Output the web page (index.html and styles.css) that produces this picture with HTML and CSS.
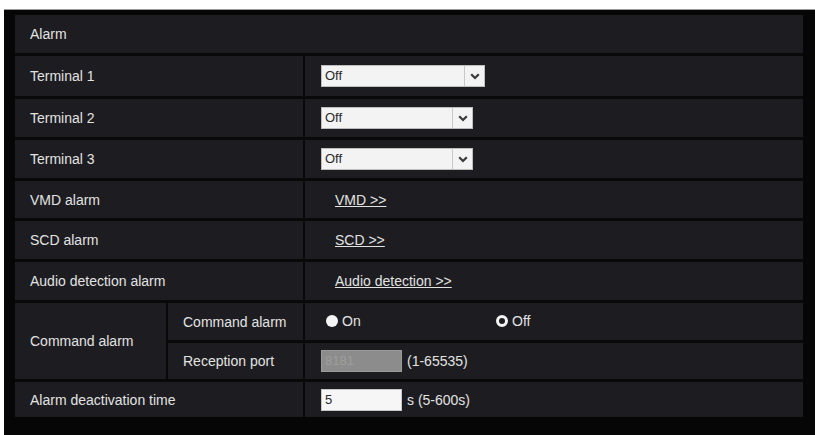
FILE: index.html
```html
<!DOCTYPE html>
<html lang="en">
<head>
<meta charset="utf-8">
<title>Alarm</title>
<link rel="stylesheet" href="styles.css">
</head>
<body>
<div class="panel">
  <div class="grid">
    <div class="cell head">Alarm</div>

    <div class="cell label wide">Terminal 1</div>
    <div class="cell value">
      <div class="select w164"><span class="sel-text">Off</span><span class="sel-btn"><svg width="10" height="7" viewBox="0 0 10 7"><polyline points="1.2,1.2 5,5 8.8,1.2" fill="none" stroke="#3a3a3a" stroke-width="2.2"/></svg></span></div>
    </div>

    <div class="cell label wide">Terminal 2</div>
    <div class="cell value">
      <div class="select w152"><span class="sel-text">Off</span><span class="sel-btn"><svg width="10" height="7" viewBox="0 0 10 7"><polyline points="1.2,1.2 5,5 8.8,1.2" fill="none" stroke="#3a3a3a" stroke-width="2.2"/></svg></span></div>
    </div>

    <div class="cell label wide">Terminal 3</div>
    <div class="cell value">
      <div class="select w152"><span class="sel-text">Off</span><span class="sel-btn"><svg width="10" height="7" viewBox="0 0 10 7"><polyline points="1.2,1.2 5,5 8.8,1.2" fill="none" stroke="#3a3a3a" stroke-width="2.2"/></svg></span></div>
    </div>

    <div class="cell label wide">VMD alarm</div>
    <div class="cell value link-cell"><a class="link" href="#">VMD &gt;&gt;</a></div>

    <div class="cell label wide">SCD alarm</div>
    <div class="cell value link-cell"><a class="link" href="#">SCD &gt;&gt;</a></div>

    <div class="cell label wide">Audio detection alarm</div>
    <div class="cell value link-cell"><a class="link" href="#">Audio detection &gt;&gt;</a></div>

    <div class="cell label group">Command alarm</div>
    <div class="cell sublabel">Command alarm</div>
    <div class="cell value radios">
      <span class="radio-item on-item"><span class="radio filled"></span>On</span>
      <span class="radio-item"><span class="radio ring"></span>Off</span>
    </div>
    <div class="cell sublabel">Reception port</div>
    <div class="cell value">
      <span class="field disabled">8181</span><span class="hint">(1-65535)</span>
    </div>

    <div class="cell label wide">Alarm deactivation time</div>
    <div class="cell value">
      <span class="field">5</span><span class="hint">s (5-600s)</span>
    </div>
  </div>
</div>
</body>
</html>
```
FILE: styles.css
```css
* { box-sizing: border-box; }

html, body {
  margin: 0;
  padding: 0;
  background: #ffffff;
}

body {
  font-family: "Liberation Sans", Arial, sans-serif;
  font-size: 14px;
  color: #e2e2e2;
}

.panel {
  margin: 9px 0 0 4px;
  height: 426px;
  background: #060607;
  border-top: 1px solid #9a9a9a;
  padding: 5px 12px 0 11px;
}

.grid {
  display: grid;
  grid-template-columns: 151px 135px 498px;
  grid-template-rows: 38px 40px 38px 38px 37px 38px 38px 37px 36px 35px;
  column-gap: 2px;
  row-gap: 3px;
  background: #09090a;
}

.cell {
  background: #1d1d21;
  display: flex;
  align-items: center;
}

.head {
  grid-column: 1 / 4;
  padding-left: 15px;
}

.label { padding-left: 15px; }
.wide { grid-column: 1 / 3; }
.group { grid-row: span 2; }
.sublabel { padding-left: 15px; }

.value { padding-left: 16px; }

/* drop-down boxes */
.select {
  height: 22px;
  background: #f3f3f3;
  border: 1px solid #bdbdbd;
  display: flex;
  color: #2a2a2a;
  font-size: 13px;
}
.w164 { width: 164px; }
.w152 { width: 152px; }
.sel-text {
  flex: 1;
  padding-left: 3px;
  line-height: 20px;
}
.sel-btn {
  width: 20px;
  border-left: 1px solid #c8c8c8;
  display: flex;
  align-items: center;
  justify-content: center;
}

/* page links */
.link-cell { padding-left: 30px; }
.link {
  color: #e2e2e2;
  text-decoration: underline;
}

/* on / off radios */
.radios {
  padding-left: 21px;
  padding-bottom: 2px;
}
.radio-item {
  display: flex;
  align-items: center;
  gap: 4px;
}
.on-item { width: 170px; }
.radio {
  width: 12px;
  height: 12px;
  border-radius: 50%;
}
.radio.filled { background: #f4f4f4; }
.radio.ring {
  border: 3px solid #f4f4f4;
  background: #1d1d21;
}

/* text fields */
.field {
  width: 81px;
  height: 22px;
  background: #f6f6f6;
  border: 1px solid #c8c8c8;
  color: #2a2a2a;
  font-size: 13px;
  line-height: 20px;
  padding-left: 3px;
}
.field.disabled {
  background: #8c8c8c;
  border-color: #9a9a9a;
  color: #9e9e9e;
}
.hint { margin-left: 5px; }
```
